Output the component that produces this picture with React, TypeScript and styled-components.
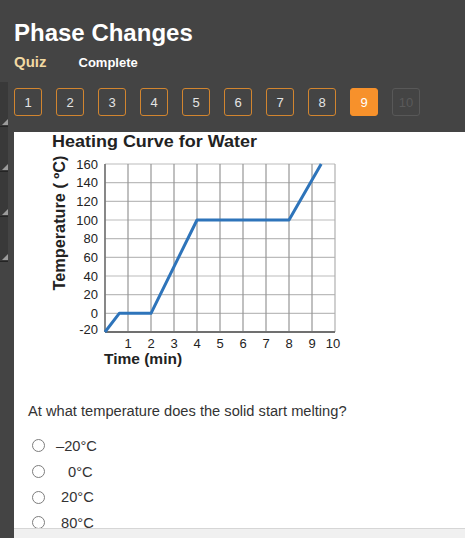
import React from "react";
import styled, { createGlobalStyle } from "styled-components";

const GlobalStyle = createGlobalStyle`
  html, body { margin: 0; padding: 0; background: #444; }
  body { font-family: "Liberation Sans", Arial, Helvetica, sans-serif; }
  * { box-sizing: border-box; }
`;

const FONT = `"Liberation Sans", Arial, Helvetica, sans-serif`;

const Page = styled.div`
  width: 465px;
  height: 538px;
  overflow: hidden;
  display: flex;
  background: #444;
`;

const Rail = styled.div`
  width: 14px;
  flex: none;
  padding-top: 82px;
  display: flex;
  flex-direction: column;
`;

const RailTab = styled.div`
  position: relative;
  width: 8px;
  height: 45px;
  background: #393939;
  border-bottom: 1px solid #242424;
  &::after {
    content: "";
    position: absolute;
    right: 0;
    bottom: 1px;
    width: 0;
    height: 0;
    border-left: 6px solid transparent;
    border-bottom: 6px solid #9c9c9c;
  }
`;

const Main = styled.div`
  flex: 1;
  min-width: 0;
  display: flex;
  flex-direction: column;
`;

const Header = styled.header`
  padding: 19px 0 16px;
`;

const Title = styled.h1`
  margin: 0;
  font-size: 24px;
  line-height: 28px;
  font-weight: 700;
  color: #fff;
`;

const SubRow = styled.div`
  display: flex;
  align-items: baseline;
  gap: 32px;
  margin-top: 6px;
  line-height: 18px;
`;

const Kind = styled.span`
  font-size: 15px;
  font-weight: 700;
  color: #f2d9a2;
`;

const Status = styled.span`
  font-size: 13px;
  font-weight: 700;
  color: #fff;
`;

const Nav = styled.nav`
  display: flex;
  gap: 14px;
  margin-top: 16px;
`;

type NavState = "done" | "current" | "locked";

const NavButton = styled.button<{ $state: NavState }>`
  width: 28px;
  height: 28px;
  padding: 0;
  border-radius: 3px;
  display: flex;
  align-items: center;
  justify-content: center;
  font-family: ${FONT};
  font-size: 13px;
  line-height: 1;
  cursor: pointer;
  border: 1px solid
    ${(p) => (p.$state === "locked" ? "#585858" : p.$state === "current" ? "#f7912b" : "#d2852f")};
  background: ${(p) => (p.$state === "current" ? "#f7912b" : "transparent")};
  color: ${(p) => (p.$state === "locked" ? "#5a5a5a" : p.$state === "current" ? "#fff" : "#e4e4e4")};
`;

const Panel = styled.main`
  flex: 1;
  min-height: 0;
  overflow: hidden;
  background: #fff;
  padding-left: 14px;
`;

const Footer = styled.div`
  height: 10px;
  flex: none;
  background: #f0f0f0;
  border-top: 1px solid #d6d6d6;
`;

const Chart = styled.svg`
  display: block;
  margin-left: 22px;
  font-family: ${FONT};
`;

const ChartTitle = styled.text`
  font-size: 17px;
  font-weight: 700;
  fill: #222;
`;

const AxisTitle = styled.text`
  font-weight: 700;
  fill: #222;
`;

const TickLabel = styled.text`
  font-size: 13px;
  fill: #222;
`;

const Question = styled.p`
  margin: 30px 0 0;
  font-size: 14.67px;
  line-height: 18px;
  color: #333;
`;

const Options = styled.div`
  margin-top: 13px;
  padding-left: 4px;
  display: flex;
  flex-direction: column;
`;

const OptionRow = styled.label`
  height: 25.7px;
  display: flex;
  align-items: center;
  cursor: pointer;
`;

const Radio = styled.input`
  appearance: none;
  -webkit-appearance: none;
  margin: 0;
  width: 13px;
  height: 13px;
  flex: none;
  border: 1px solid #7d7d7d;
  border-radius: 50%;
  background: #fff;
`;

const OptionText = styled.span<{ $indent: number }>`
  margin-left: ${(p) => p.$indent}px;
  font-size: 14.67px;
  line-height: 18px;
  color: #333;
`;

const X0 = 105;
const XW = 23;
const Y0 = 331;
const YTOP = 163;
const xOf = (m: number) => X0 + XW * m;
const yOf = (t: number) => Y0 - ((t + 20) / 20) * ((Y0 - YTOP) / 9);

const curve: [number, number][] = [
  [0, -20],
  [0.62, 0],
  [2, 0],
  [4, 100],
  [8, 100],
  [9.4, 160],
];

const temps = [-20, 0, 20, 40, 60, 80, 100, 120, 140, 160];

function HeatingChart() {
  const cols = Array.from({ length: 11 }, (_, i) => i);
  return (
    <Chart width={300} height={240} viewBox="50 131 300 240">
      <ChartTitle x={52} y={146} textLength={205} lengthAdjust="spacingAndGlyphs">
        Heating Curve for Water
      </ChartTitle>
      <AxisTitle
        x={65}
        y={222}
        fontSize={16.5}
        textAnchor="middle"
        transform="rotate(-90 65 222)"
        textLength={135}
        lengthAdjust="spacingAndGlyphs"
      >
        Temperature ( ºC)
      </AxisTitle>
      {temps.map((t) => (
        <line key={"h" + t} x1={X0} x2={xOf(10)} y1={yOf(t)} y2={yOf(t)} stroke="#bcbcbc" strokeWidth={1.2} />
      ))}
      {cols.map((i) => (
        <line key={"v" + i} x1={xOf(i)} x2={xOf(i)} y1={YTOP} y2={Y0} stroke={i === 10 ? "#b0b0b0" : "#969696"} strokeWidth={1.2} />
      ))}
      <line x1={X0} x2={xOf(10)} y1={Y0} y2={Y0} stroke="#707070" strokeWidth={1.8} />
      <line x1={X0} x2={X0} y1={YTOP} y2={Y0} stroke="#707070" strokeWidth={1.4} />
      <polyline
        points={curve.map(([m, t]) => `${xOf(m)},${yOf(t)}`).join(" ")}
        fill="none"
        stroke="#2e74ba"
        strokeWidth={3}
        strokeLinejoin="round"
      />
      {temps.map((t) => (
        <TickLabel key={"y" + t} x={98} y={(t === -20 ? 328 : yOf(t)) + 4.7} textAnchor="end">
          {t}
        </TickLabel>
      ))}
      {cols.slice(1).map((i) => (
        <TickLabel key={"x" + i} x={xOf(i) - (i === 10 ? 2 : 0)} y={347} textAnchor="middle">
          {i}
        </TickLabel>
      ))}
      <AxisTitle x={104} y={363} fontSize={15.5}>
        Time (min)
      </AxisTitle>
    </Chart>
  );
}

const answers = [
  { text: "–20°C", indent: 11 },
  { text: "0°C", indent: 23 },
  { text: "20°C", indent: 16 },
  { text: "80°C", indent: 16 },
];

export default function App() {
  const pages = Array.from({ length: 10 }, (_, i) => i + 1);
  return (
    <>
      <GlobalStyle />
      <Page>
        <Rail>
          <RailTab />
          <RailTab />
          <RailTab />
          <RailTab />
        </Rail>
        <Main>
          <Header>
            <Title>Phase Changes</Title>
            <SubRow>
              <Kind>Quiz</Kind>
              <Status>Complete</Status>
            </SubRow>
            <Nav>
              {pages.map((n) => (
                <NavButton key={n} $state={n === 9 ? "current" : n === 10 ? "locked" : "done"}>
                  {n}
                </NavButton>
              ))}
            </Nav>
          </Header>
          <Panel>
            <HeatingChart />
            <Question>At what temperature does the solid start melting?</Question>
            <Options>
              {answers.map((a) => (
                <OptionRow key={a.text}>
                  <Radio type="radio" name="answer" />
                  <OptionText $indent={a.indent}>{a.text}</OptionText>
                </OptionRow>
              ))}
            </Options>
          </Panel>
          <Footer />
        </Main>
      </Page>
    </>
  );
}
